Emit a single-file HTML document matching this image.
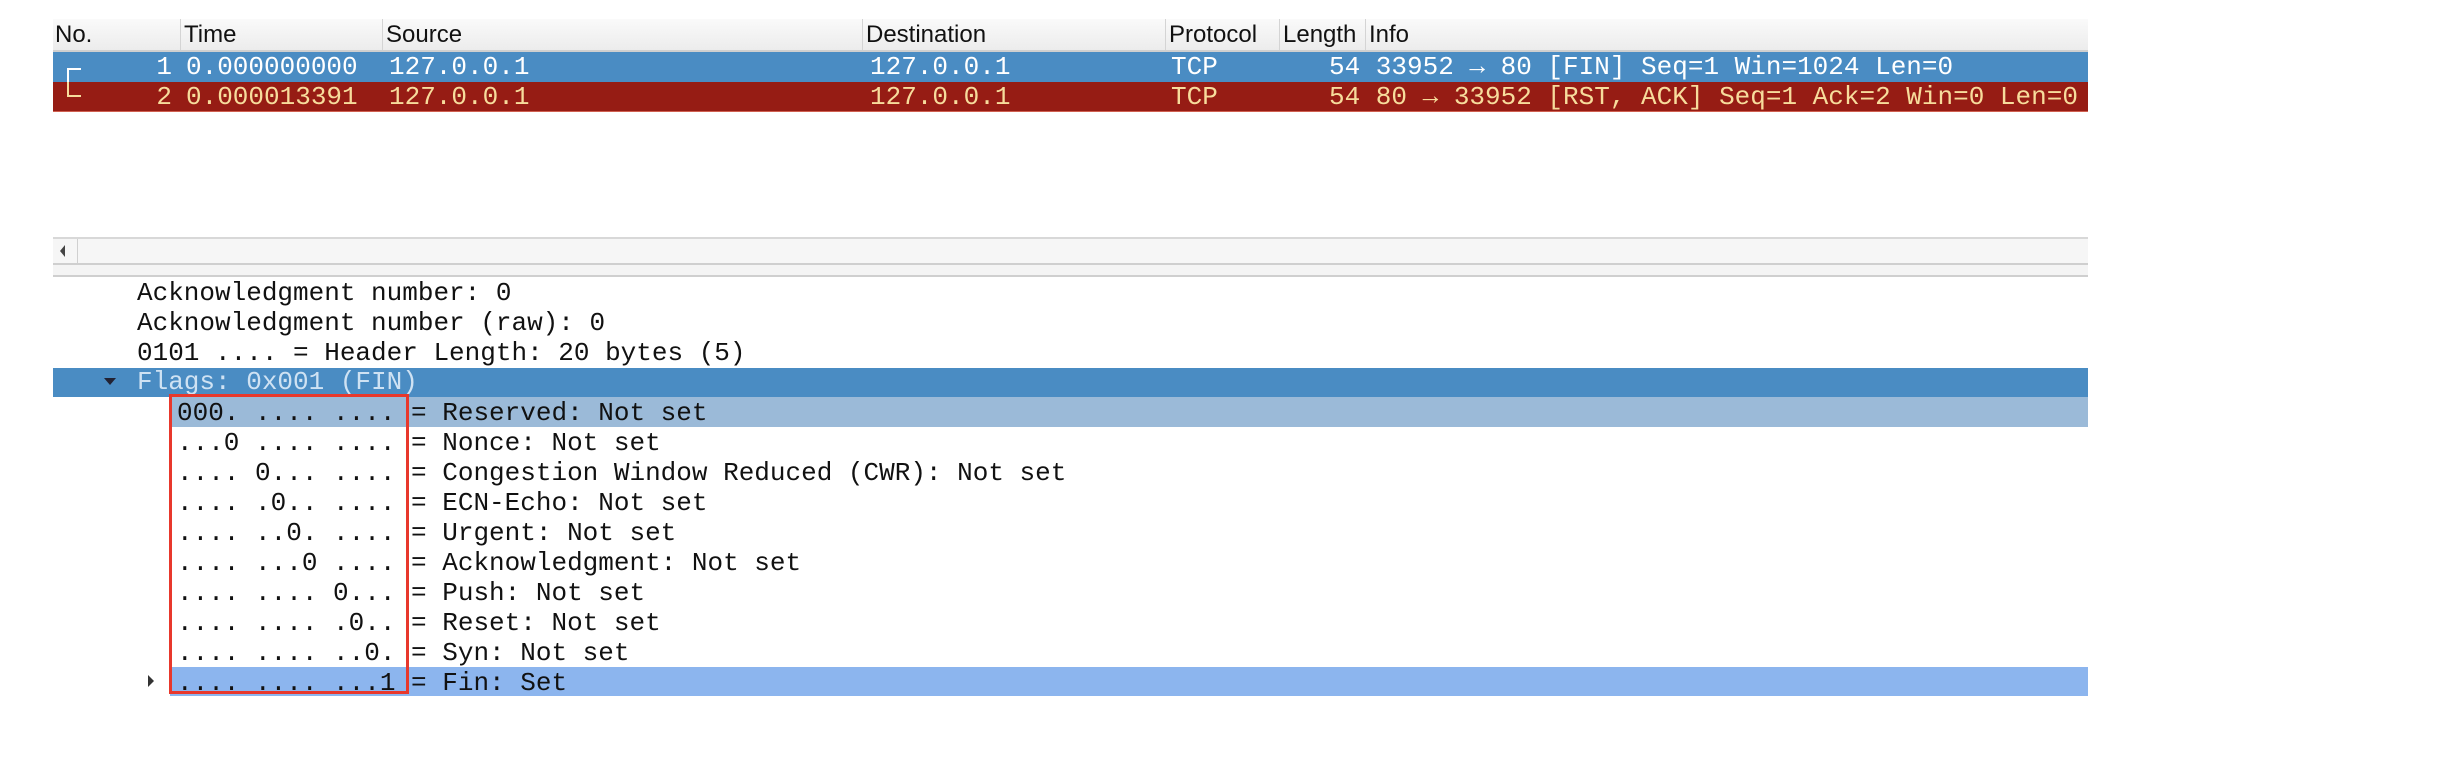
<!DOCTYPE html>
<html><head><meta charset="utf-8"><style>
*{margin:0;padding:0;box-sizing:border-box}
body{width:2452px;height:774px;background:#fff;position:relative;overflow:hidden;font-family:"Liberation Mono","DejaVu Sans Mono",monospace}
.hdr{position:absolute;left:53px;top:19px;width:2035px;height:33px;background:linear-gradient(#fafafa,#ececec);border-bottom:2px solid #cfcfcf}
.hc{position:absolute;top:0;height:31px;font-family:"Liberation Sans",sans-serif;font-size:24px;line-height:31px;color:#111;border-left:1px solid #d4d4d4;padding-left:3px}
.row{position:absolute;left:53px;width:2035px;height:30px}
.m{position:absolute;font-size:26px;line-height:30px;white-space:pre}
.d{position:absolute;font-size:26px;line-height:30px;white-space:pre;color:#111}
</style></head><body>
<div class="hdr">
<div class="hc" style="left:0;border-left:none;padding-left:2px">No.</div>
<div class="hc" style="left:127px">Time</div>
<div class="hc" style="left:329px">Source</div>
<div class="hc" style="left:809px">Destination</div>
<div class="hc" style="left:1112px">Protocol</div>
<div class="hc" style="left:1226px;width:86px;overflow:hidden">Length</div>
<div class="hc" style="left:1312px">Info</div>
</div>
<div class="row" style="top:52px;background:#4a8cc3;color:#fff">
<div class="m" style="left:0;width:119px;text-align:right">1</div>
<div class="m" style="left:133px">0.000000000</div>
<div class="m" style="left:336px">127.0.0.1</div>
<div class="m" style="left:817px">127.0.0.1</div>
<div class="m" style="left:1118px">TCP</div>
<div class="m" style="left:1276px">54 33952 → 80 [FIN] Seq=1 Win=1024 Len=0</div>
<div style="position:absolute;left:14px;top:16px;width:14px;height:14px;border-left:2px solid #fff;border-top:2px solid #fff"></div>
</div>
<div class="row" style="top:82px;background:#961c14;color:#f7dc9c;border-bottom:1px solid #d06050">
<div class="m" style="left:0;width:119px;text-align:right">2</div>
<div class="m" style="left:133px">0.000013391</div>
<div class="m" style="left:336px">127.0.0.1</div>
<div class="m" style="left:817px">127.0.0.1</div>
<div class="m" style="left:1118px">TCP</div>
<div class="m" style="left:1276px">54 80 → 33952 [RST, ACK] Seq=1 Ack=2 Win=0 Len=0</div>
<div style="position:absolute;left:14px;top:0;width:14px;height:15px;border-left:2px solid #f7dc9c;border-bottom:2px solid #f7dc9c"></div>
</div>
<div style="position:absolute;left:53px;top:237px;width:2035px;height:28px;background:#f6f6f6;border-top:2px solid #d8d8d8;border-bottom:2px solid #cfcfcf"></div>
<div style="position:absolute;left:53px;top:239px;width:25px;height:24px;border-right:1px solid #d0d0d0"></div>
<div style="position:absolute;left:60px;top:245px;width:0;height:0;border-top:6px solid transparent;border-bottom:6px solid transparent;border-right:5px solid #444"></div>
<div style="position:absolute;left:53px;top:265px;width:2035px;height:12px;background:#f4f4f4;border-bottom:2px solid #cfcfcf"></div>
<div class="d" style="left:137px;top:278px">Acknowledgment number: 0</div>
<div class="d" style="left:137px;top:308px">Acknowledgment number (raw): 0</div>
<div class="d" style="left:137px;top:338px">0101 .... = Header Length: 20 bytes (5)</div>
<div style="position:absolute;left:53px;top:368px;width:2035px;height:29px;background:#4a8cc3"></div>
<div style="position:absolute;left:104px;top:378px;border-left:6px solid transparent;border-right:6px solid transparent;border-top:7px solid #223"></div>
<div class="d" style="left:137px;top:367px;color:#cfe2f3">Flags: 0x001 (FIN)</div>
<div style="position:absolute;left:170px;top:397px;width:1918px;height:30px;background:#9bbad8"></div>
<div style="position:absolute;left:170px;top:667px;width:1918px;height:29px;background:#8cb5ee"></div>
<div style="position:absolute;left:148px;top:675px;border-top:6px solid transparent;border-bottom:6px solid transparent;border-left:6px solid #333"></div>
<div class="d" style="left:177px;top:398px">000. .... .... = Reserved: Not set</div>
<div class="d" style="left:177px;top:428px">...0 .... .... = Nonce: Not set</div>
<div class="d" style="left:177px;top:458px">.... 0... .... = Congestion Window Reduced (CWR): Not set</div>
<div class="d" style="left:177px;top:488px">.... .0.. .... = ECN-Echo: Not set</div>
<div class="d" style="left:177px;top:518px">.... ..0. .... = Urgent: Not set</div>
<div class="d" style="left:177px;top:548px">.... ...0 .... = Acknowledgment: Not set</div>
<div class="d" style="left:177px;top:578px">.... .... 0... = Push: Not set</div>
<div class="d" style="left:177px;top:608px">.... .... .0.. = Reset: Not set</div>
<div class="d" style="left:177px;top:638px">.... .... ..0. = Syn: Not set</div>
<div class="d" style="left:177px;top:668px">.... .... ...1 = Fin: Set</div>
<div style="position:absolute;left:169px;top:394px;width:240px;height:300px;border:3px solid #e8382c"></div>
</body></html>
